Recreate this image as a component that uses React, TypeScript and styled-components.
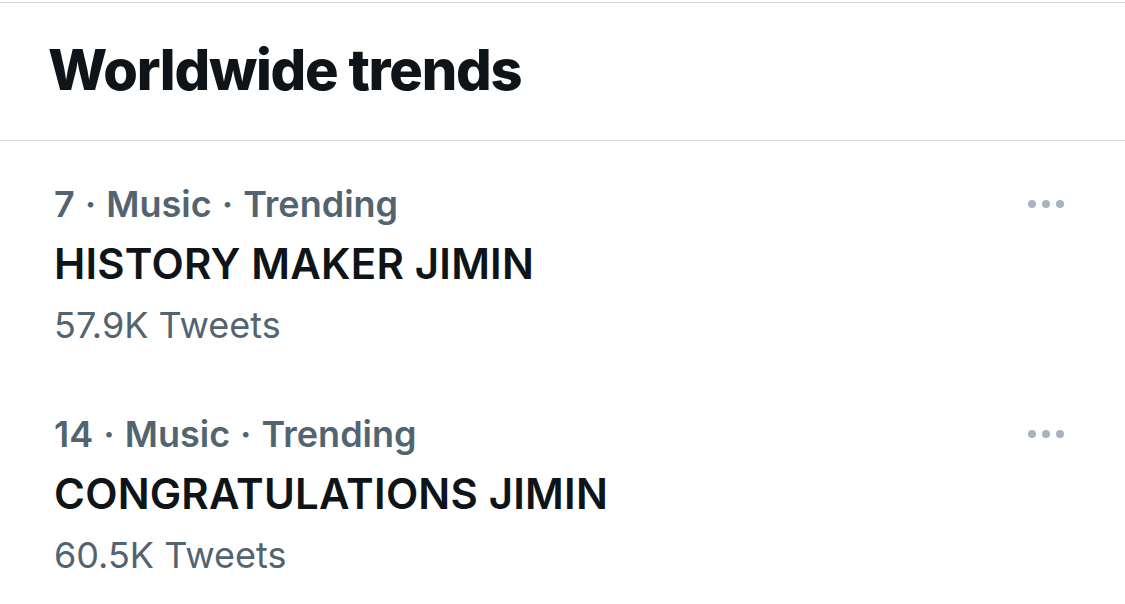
import React from 'react';
import styled, { createGlobalStyle } from 'styled-components';

const GlobalStyle = createGlobalStyle`
  html, body {
    margin: 0;
    padding: 0;
    background: #ffffff;
  }
  body {
    font-family: Inter, 'Noto Sans', 'Liberation Sans', sans-serif;
    -webkit-font-smoothing: antialiased;
  }
`;

const Panel = styled.section`
  margin-top: 2px;
  border-top: 1px solid #cfd5da;
  width: 1125px;
`;

const Header = styled.header`
  padding: 39px 48px 42px;
  border-bottom: 1px solid #d6d9de;
`;

const Title = styled.h2`
  margin: 0;
  font-size: 56px;
  line-height: 56px;
  font-weight: 800;
  color: #0f1419;
  letter-spacing: -1.25px;
`;

const Row = styled.div`
  display: flex;
  align-items: flex-start;
  justify-content: space-between;
  padding: 41px 61px 24px 54px;
`;

const Info = styled.div`
  display: flex;
  flex-direction: column;
`;

const Meta = styled.div`
  font-size: 36px;
  line-height: 44px;
  font-weight: 600;
  color: #536471;
`;

const Sep = styled.span`
  margin: 0 10px;
`;

const Name = styled.div`
  margin-top: 8px;
  font-size: 42px;
  line-height: 60px;
  font-weight: 600;
  color: #0f1419;
  letter-spacing: 0.2px;
`;

const Count = styled.div`
  margin-top: 9px;
  font-size: 36px;
  line-height: 44px;
  font-weight: 400;
  color: #536471;
`;

const More = styled.div`
  display: flex;
  gap: 6px;
  margin-top: 18px;
`;

const Dot = styled.span`
  width: 8px;
  height: 8px;
  border-radius: 50%;
  background: #a9b3bd;
`;

type Trend = { rank: number; name: string; tweets: string };

const trends: Trend[] = [
  { rank: 7, name: 'HISTORY MAKER JIMIN', tweets: '57.9K Tweets' },
  { rank: 14, name: 'CONGRATULATIONS JIMIN', tweets: '60.5K Tweets' },
];

export default function App() {
  return (
    <>
      <GlobalStyle />
      <Panel>
        <Header>
          <Title>Worldwide trends</Title>
        </Header>
        {trends.map((t) => (
          <Row key={t.rank}>
            <Info>
              <Meta>
                {t.rank}
                <Sep>·</Sep>Music<Sep>·</Sep>Trending
              </Meta>
              <Name>{t.name}</Name>
              <Count>{t.tweets}</Count>
            </Info>
            <More>
              <Dot />
              <Dot />
              <Dot />
            </More>
          </Row>
        ))}
      </Panel>
    </>
  );
}
